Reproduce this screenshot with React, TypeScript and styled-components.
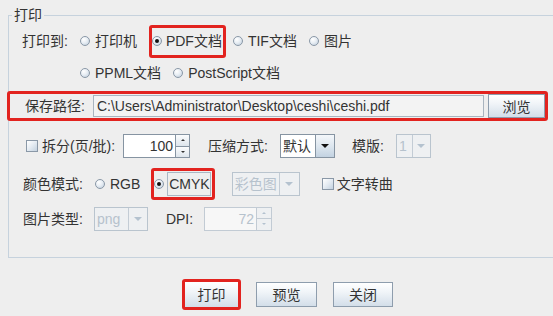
import React from "react";
import styled, { createGlobalStyle, css } from "styled-components";

const GlobalStyle = createGlobalStyle`
  html, body { margin: 0; padding: 0; background: #eeeeee; overflow: hidden; }
  body {
    font-family: "Liberation Sans", "Noto Sans CJK SC", sans-serif;
    font-size: 14px;
    color: #333333;
  }
`;

const Dialog = styled.div`
  width: 575px;
  height: 316px;
  display: flex;
  flex-direction: column;
  background: #eeeeee;
`;

const Panel = styled.fieldset`
  margin: 6px 8px 0 8px;
  padding: 0 0 25px 0;
  border: 1px solid #c6d2dd;
  min-width: 0;
`;

const Legend = styled.legend`
  margin-left: 3px;
  padding: 0 2px;
  font-size: 14px;
  line-height: 18px;
  color: #333;
`;

const Body = styled.div`
  display: flex;
  flex-direction: column;
`;

const Row = styled.div<{ $h: number; $mt?: number; $pl: number }>`
  display: flex;
  align-items: center;
  height: ${(p) => p.$h}px;
  margin-top: ${(p) => p.$mt ?? 0}px;
  padding-left: ${(p) => p.$pl}px;
  white-space: nowrap;
`;

const Label = styled.span<{ $ml?: number; $muted?: boolean }>`
  margin-left: ${(p) => p.$ml ?? 0}px;
  line-height: 18px;
  white-space: nowrap;
  color: #333;
`;

const RadioItem = styled.span<{ $ml?: number; $gap?: number }>`
  display: inline-flex;
  align-items: center;
  gap: ${(p) => p.$gap ?? 5}px;
  margin-left: ${(p) => p.$ml ?? 0}px;
  line-height: 18px;
  white-space: nowrap;
`;

const RadioCircle = styled.span<{ $on?: boolean }>`
  position: relative;
  width: 10px;
  height: 10px;
  box-sizing: border-box;
  border-radius: 50%;
  border: 1px solid #8a98a7;
  background: radial-gradient(circle at 35% 30%, #ffffff 0%, #e8eef4 45%, #bccbda 100%);
  flex: none;
  ${(p) =>
    p.$on &&
    css`
      &::after {
        content: "";
        position: absolute;
        left: 2px;
        top: 2px;
        width: 4px;
        height: 4px;
        border-radius: 50%;
        background: #111;
      }
    `}
`;

const Highlight = styled.span<{ $ml?: number; $h: number; $pr?: number }>`
  display: inline-flex;
  align-items: center;
  box-sizing: border-box;
  height: ${(p) => p.$h}px;
  margin-left: ${(p) => p.$ml ?? 0}px;
  padding: 0 ${(p) => p.$pr ?? 1}px 0 0;
  border: 3px solid #e2231f;
  border-radius: 3px;
`;

const FocusText = styled.span`
  border: 1px solid #aab7c4;
  padding: 0 0 0 1px;
  line-height: 22px;
`;

const CheckBox = styled.span<{ $ml?: number }>`
  width: 12px;
  height: 12px;
  box-sizing: border-box;
  margin-left: ${(p) => p.$ml ?? 0}px;
  border: 1px solid #8a98a7;
  background: linear-gradient(135deg, #ffffff 0%, #e4ebf2 50%, #c3d1df 100%);
  flex: none;
`;

const CheckLabel = styled.span<{ $gap: number }>`
  margin-left: ${(p) => p.$gap}px;
  line-height: 18px;
`;

const PathBox = styled.div`
  display: flex;
  align-items: center;
  box-sizing: border-box;
  height: 30px;
  margin: 3px 18px 0 -2px;
  padding-left: 15px;
  border: 3px solid #e2231f;
  border-radius: 3px;
`;

const PathField = styled.div`
  flex: 1;
  height: 22px;
  margin-left: 8px;
  box-sizing: border-box;
  border: 1px solid #a9b4bf;
  background: #f3f3f3;
  padding-left: 3px;
  line-height: 20px;
  color: #333;
  overflow: hidden;
  white-space: nowrap;
`;

const Button = styled.button<{ $w: number; $h?: number; $ml?: number; $hl?: boolean }>`
  width: ${(p) => p.$w}px;
  height: ${(p) => p.$h ?? 25}px;
  margin-left: ${(p) => p.$ml ?? 0}px;
  box-sizing: border-box;
  padding: 0;
  border: 1px solid #8e9dad;
  border-radius: 0;
  background: linear-gradient(#ffffff 0%, #f0f4f8 40%, #d3dee9 100%);
  font-family: inherit;
  font-size: 14px;
  color: #333;
  flex: none;
  ${(p) =>
    p.$hl &&
    css`
      border: 3px solid #e2231f;
      border-radius: 3px;
    `}
`;

const Combo = styled.div<{ $w: number; $ml?: number; $disabled?: boolean }>`
  display: flex;
  width: ${(p) => p.$w}px;
  height: 24px;
  margin-left: ${(p) => p.$ml ?? 0}px;
  box-sizing: border-box;
  border: 1px solid ${(p) => (p.$disabled ? "#b9c4ce" : "#8694a2")};
  flex: none;
`;

const ComboText = styled.span<{ $disabled?: boolean }>`
  flex: 1;
  padding-left: 2px;
  line-height: 22px;
  background: ${(p) => (p.$disabled ? "#eef0f2" : "#ffffff")};
  color: ${(p) => (p.$disabled ? "#b6c2cd" : "#333")};
  overflow: hidden;
`;

const ComboArrow = styled.span<{ $w: number; $disabled?: boolean }>`
  display: flex;
  align-items: center;
  justify-content: center;
  width: ${(p) => p.$w}px;
  border-left: 1px solid ${(p) => (p.$disabled ? "#c3ccd5" : "#8694a2")};
  background: ${(p) =>
    p.$disabled ? "#eef0f2" : "linear-gradient(#f4f7fa 0%, #dbe5ee 55%, #c2d2e1 100%)"};
  &::after {
    content: "";
    border-left: 4px solid transparent;
    border-right: 4px solid transparent;
    border-top: 4px solid ${(p) => (p.$disabled ? "#b4c2cf" : "#111")};
  }
`;

const Spinner = styled.div<{ $w: number; $ml?: number; $disabled?: boolean }>`
  display: flex;
  width: ${(p) => p.$w}px;
  height: 24px;
  margin-left: ${(p) => p.$ml ?? 0}px;
  box-sizing: border-box;
  border: 1px solid ${(p) => (p.$disabled ? "#c2cbd4" : "#8694a2")};
  flex: none;
`;

const SpinField = styled.span<{ $disabled?: boolean }>`
  flex: 1;
  text-align: right;
  padding-right: 2px;
  line-height: 22px;
  background: ${(p) => (p.$disabled ? "#f7f7f7" : "#ffffff")};
  color: ${(p) => (p.$disabled ? "#b6c2cd" : "#333")};
`;

const SpinButtons = styled.div<{ $w: number; $disabled?: boolean }>`
  width: ${(p) => p.$w}px;
  display: flex;
  flex-direction: column;
  border-left: 1px solid ${(p) => (p.$disabled ? "#c2cbd4" : "#8694a2")};
`;

const SpinBtn = styled.span<{ $down?: boolean; $disabled?: boolean }>`
  flex: 1;
  display: flex;
  align-items: center;
  justify-content: center;
  background: ${(p) => (p.$disabled ? "#eef0f2" : "linear-gradient(#fbfcfd, #dde5ec)")};
  ${(p) => p.$down && css`border-top: 1px solid ${p.$disabled ? "#c2cbd4" : "#8694a2"};`}
  &::after {
    content: "";
    border-left: 2px solid transparent;
    border-right: 2px solid transparent;
    ${(p) =>
      p.$down
        ? css`border-top: 2px solid ${p.$disabled ? "#b4c2cf" : "#333"};`
        : css`border-bottom: 2px solid ${p.$disabled ? "#b4c2cf" : "#333"};`}
  }
`;

const ButtonRow = styled.div`
  display: flex;
  justify-content: center;
  align-items: center;
  height: 32px;
  margin-top: 20px;
`;

export default function App() {
  return (
    <>
      <GlobalStyle />
      <Dialog>
        <Panel>
          <Legend>打印</Legend>
          <Body>
            <Row $h={34} $pl={13}>
              <Label>打印到:</Label>
              <RadioItem $ml={12}>
                <RadioCircle />
                打印机
              </RadioItem>
              <Highlight $ml={12} $h={33}>
                <RadioItem $gap={4}>
                  <RadioCircle $on />
                  PDF文档
                </RadioItem>
              </Highlight>
              <RadioItem $ml={7}>
                <RadioCircle />
                TIF文档
              </RadioItem>
              <RadioItem $ml={12}>
                <RadioCircle />
                图片
              </RadioItem>
            </Row>
            <Row $h={30} $pl={71}>
              <RadioItem>
                <RadioCircle />
                PPML文档
              </RadioItem>
              <RadioItem $ml={12}>
                <RadioCircle />
                PostScript文档
              </RadioItem>
            </Row>
            <PathBox>
              <Label>保存路径:</Label>
              <PathField>C:\Users\Administrator\Desktop\ceshi\ceshi.pdf</PathField>
              <Button $w={57} $h={24} $ml={4}>
                浏览
              </Button>
            </PathBox>
            <Row $h={26} $mt={12} $pl={17}>
              <CheckBox />
              <CheckLabel $gap={4}>拆分(页/批):</CheckLabel>
              <Spinner $w={67} $ml={8}>
                <SpinField>100</SpinField>
                <SpinButtons $w={13}>
                  <SpinBtn />
                  <SpinBtn $down />
                </SpinButtons>
              </Spinner>
              <Label $ml={18}>压缩方式:</Label>
              <Combo $w={55} $ml={12}>
                <ComboText>默认</ComboText>
                <ComboArrow $w={18} />
              </Combo>
              <Label $ml={17}>模版:</Label>
              <Combo $w={35} $ml={12} $disabled>
                <ComboText $disabled>1</ComboText>
                <ComboArrow $w={17} $disabled />
              </Combo>
            </Row>
            <Row $h={33} $mt={8} $pl={14}>
              <Label>颜色模式:</Label>
              <RadioItem $ml={12}>
                <RadioCircle />
                RGB
              </RadioItem>
              <Highlight $ml={11} $h={32} $pr={1}>
                <RadioItem $gap={3}>
                  <RadioCircle $on />
                  <FocusText>CMYK</FocusText>
                </RadioItem>
              </Highlight>
              <Combo $w={68} $ml={17} $disabled>
                <ComboText $disabled>彩色图</ComboText>
                <ComboArrow $w={19} $disabled />
              </Combo>
              <CheckBox $ml={22} />
              <CheckLabel $gap={3}>文字转曲</CheckLabel>
            </Row>
            <Row $h={27} $mt={5} $pl={14}>
              <Label>图片类型:</Label>
              <Combo $w={54} $ml={11} $disabled>
                <ComboText $disabled>png</ComboText>
                <ComboArrow $w={18} $disabled />
              </Combo>
              <Label $ml={18}>DPI:</Label>
              <Spinner $w={68} $ml={11} $disabled>
                <SpinField $disabled>72</SpinField>
                <SpinButtons $w={14} $disabled>
                  <SpinBtn $disabled />
                  <SpinBtn $down $disabled />
                </SpinButtons>
              </Spinner>
            </Row>
          </Body>
        </Panel>
        <ButtonRow>
          <Button $w={59} $h={31} $hl>
            打印
          </Button>
          <Button $w={61} $ml={15}>
            预览
          </Button>
          <Button $w={60} $ml={16}>
            关闭
          </Button>
        </ButtonRow>
      </Dialog>
    </>
  );
}
